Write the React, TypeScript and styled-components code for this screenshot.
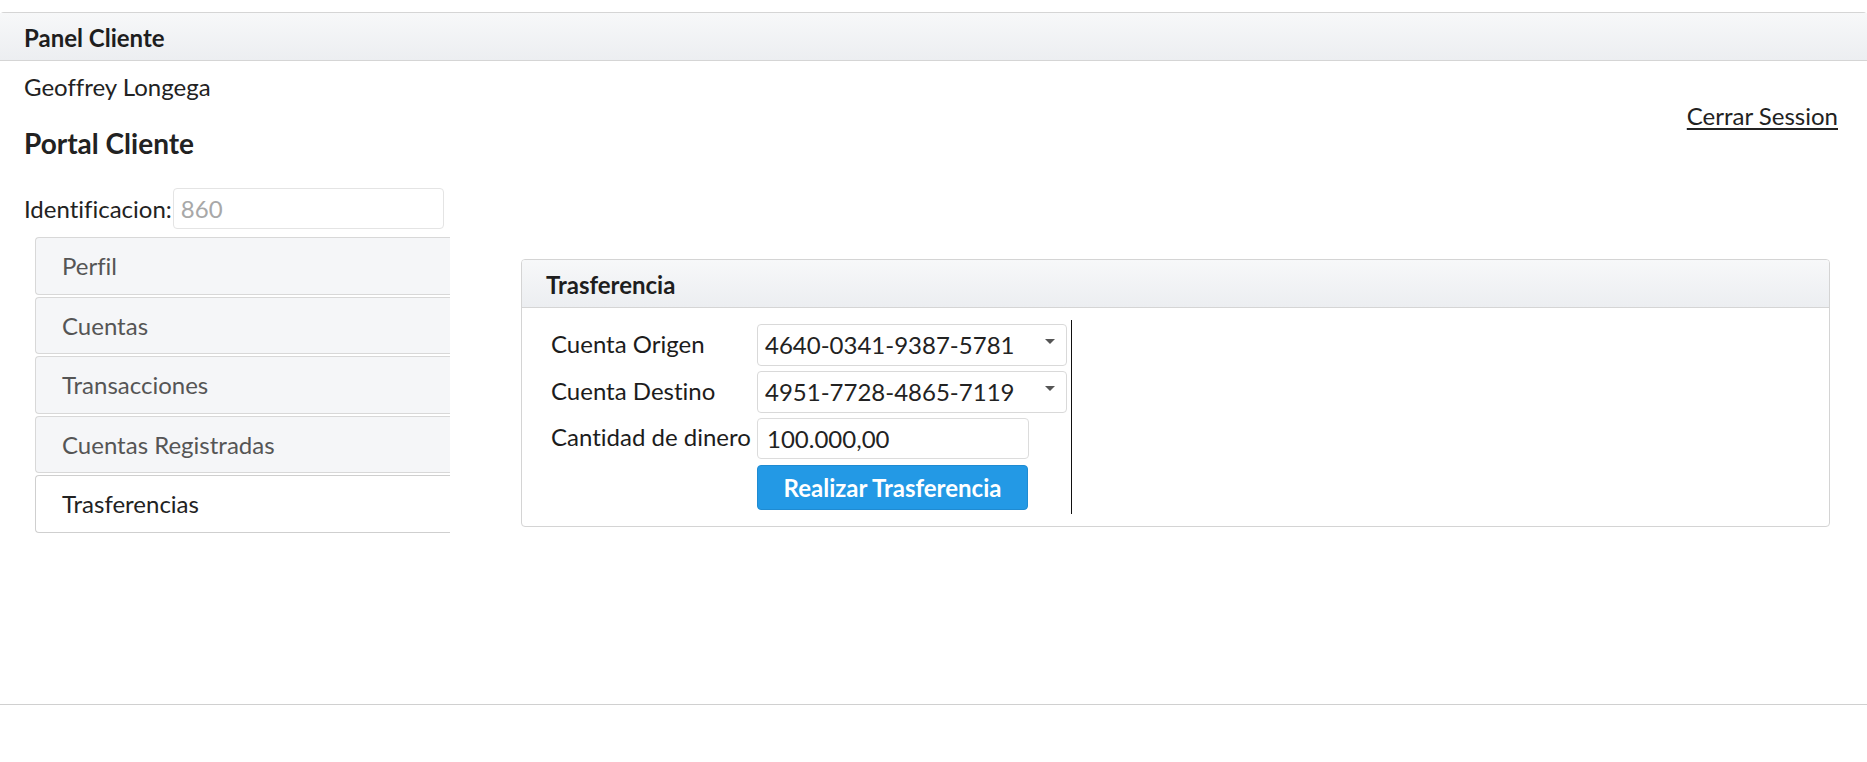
import React from 'react';
import styled, { createGlobalStyle } from 'styled-components';

const GlobalStyle = createGlobalStyle`
  html, body { margin: 0; padding: 0; background: #ffffff; }
  body {
    font-family: Lato, "Open Sans", "Liberation Sans", sans-serif;
    color: #222222;
    font-variant-ligatures: none;
    font-feature-settings: "liga" 0, "clig" 0;
  }
  input, button { font-variant-ligatures: none; font-feature-settings: "liga" 0, "clig" 0; }
  *, *::before, *::after { box-sizing: border-box; }
`;

const Page = styled.div`
  padding-top: 12px;
`;

const OuterPanel = styled.section`
  border-top: 1px solid #d5d5d5;
  border-bottom: 1px solid #d0d0d0;
  border-radius: 4px 4px 0 0;
`;

const PanelHeader = styled.header<{ $indent: number }>`
  height: 48px;
  padding: 11px 0 0 ${(p) => p.$indent}px;
  border-bottom: 1px solid #d5d5d5;
  background: linear-gradient(to bottom, #f7f8f9, #eceef1);
  font-weight: 700;
  font-size: 24px;
  line-height: 28.8px;
  color: #1e1e1e;
`;

const OuterBody = styled.div`
  height: 643px;
  padding: 11px 29px 0 24px;
`;

const UserName = styled.div`
  font-size: 24px;
  line-height: 29px;
`;

const TitleRow = styled.div`
  display: flex;
  justify-content: space-between;
  align-items: flex-start;
`;

const PortalTitle = styled.h3`
  margin: 25px 0 0;
  font-size: 28px;
  font-weight: 700;
  line-height: 34px;
  color: #222222;
`;

const LogoutLink = styled.a`
  font-size: 24px;
  line-height: 29px;
  color: #222222;
  text-decoration: underline;
  text-underline-offset: 3px;
  cursor: pointer;
`;

const IdRow = styled.div`
  display: flex;
  align-items: center;
  margin-top: 28px;
  height: 41px;
`;

const IdLabel = styled.label`
  font-size: 24px;
  line-height: 29px;
  white-space: nowrap;
`;

const IdInput = styled.input`
  width: 271px;
  height: 41px;
  margin-left: 1px;
  padding: 0 7px;
  border: 1px solid #e4e4e4;
  border-radius: 4px;
  font-family: inherit;
  font-size: 24px;
  color: #a8a8a8;
  background: #ffffff;
  outline: none;
`;

const Main = styled.div`
  display: flex;
  align-items: flex-start;
  margin-top: 8px;
`;

const TabList = styled.nav`
  display: flex;
  flex-direction: column;
  gap: 2px;
  width: 415px;
  margin-left: 11px;
  flex-shrink: 0;
`;

const Tab = styled.div<{ $active?: boolean }>`
  display: flex;
  align-items: center;
  height: 57.5px;
  padding-left: 26px;
  border: 1px solid ${(p) => (p.$active ? '#cfcfcf' : '#d8d8d8')};
  border-right: none;
  border-radius: 4px 0 0 4px;
  background: ${(p) => (p.$active ? '#ffffff' : '#f5f6f8')};
  color: ${(p) => (p.$active ? '#222222' : '#555555')};
  font-size: 24px;
  line-height: 29px;
  cursor: pointer;
`;

const TransferPanel = styled.section`
  flex: 1;
  margin: 22px 8px 0 71px;
  border: 1px solid #d4d4d4;
  border-radius: 4px;
  overflow: hidden;
`;

const TransferBody = styled.div`
  padding: 12px 0 12px 25px;
`;

const FormGrid = styled.div`
  display: inline-grid;
  grid-template-columns: 198px 310px;
  column-gap: 8px;
  row-gap: 5px;
  padding: 4px;
  border-right: 1px solid #111111;
`;

const FieldLabel = styled.label`
  align-self: center;
  padding-bottom: 4px;
  font-size: 24px;
  line-height: 29px;
  white-space: nowrap;
  color: #1c1c1c;
`;

const Select = styled.div`
  display: flex;
  justify-content: space-between;
  align-items: flex-start;
  height: 42px;
  padding: 0 11px 0 7px;
  border: 1px solid #d9d9d9;
  border-radius: 4px;
  background: #ffffff;
  font-size: 24px;
  line-height: 40px;
  color: #222222;
  cursor: pointer;
`;

const Caret = styled.span`
  width: 0;
  height: 0;
  margin-top: 14px;
  border-left: 5px solid transparent;
  border-right: 5px solid transparent;
  border-top: 5px solid #555555;
`;

const AmountInput = styled.input`
  width: 272px;
  height: 41px;
  padding: 0 9px;
  border: 1px solid #dcdcdc;
  border-radius: 4px;
  font-family: inherit;
  font-size: 24px;
  color: #222222;
  background: #ffffff;
  outline: none;
`;

const SubmitButton = styled.button`
  grid-column: 2;
  justify-self: start;
  width: 271px;
  height: 45px;
  margin-top: 1px;
  padding: 0;
  border: 1px solid #1f8bd2;
  border-radius: 4px;
  background: #2399e5;
  color: #ffffff;
  font-family: inherit;
  font-size: 24px;
  font-weight: 700;
  line-height: 29px;
  cursor: pointer;
`;

const tabs = ['Perfil', 'Cuentas', 'Transacciones', 'Cuentas Registradas', 'Trasferencias'];

export default function App() {
  return (
    <Page>
      <GlobalStyle />
      <OuterPanel>
        <PanelHeader $indent={24}>Panel Cliente</PanelHeader>
        <OuterBody>
          <UserName>Geoffrey Longega</UserName>
          <TitleRow>
            <PortalTitle>Portal Cliente</PortalTitle>
            <LogoutLink>Cerrar Session</LogoutLink>
          </TitleRow>
          <IdRow>
            <IdLabel>Identificacion:</IdLabel>
            <IdInput value="860" readOnly />
          </IdRow>
          <Main>
            <TabList>
              {tabs.map((t) => (
                <Tab key={t} $active={t === 'Trasferencias'}>
                  {t}
                </Tab>
              ))}
            </TabList>
            <TransferPanel>
              <PanelHeader $indent={24}>Trasferencia</PanelHeader>
              <TransferBody>
                <FormGrid>
                  <FieldLabel>Cuenta Origen</FieldLabel>
                  <Select role="combobox">
                    <span>4640-0341-9387-5781</span>
                    <Caret />
                  </Select>
                  <FieldLabel>Cuenta Destino</FieldLabel>
                  <Select role="combobox">
                    <span>4951-7728-4865-7119</span>
                    <Caret />
                  </Select>
                  <FieldLabel>Cantidad de dinero</FieldLabel>
                  <AmountInput defaultValue="100.000,00" />
                  <SubmitButton>Realizar Trasferencia</SubmitButton>
                </FormGrid>
              </TransferBody>
            </TransferPanel>
          </Main>
        </OuterBody>
      </OuterPanel>
    </Page>
  );
}
